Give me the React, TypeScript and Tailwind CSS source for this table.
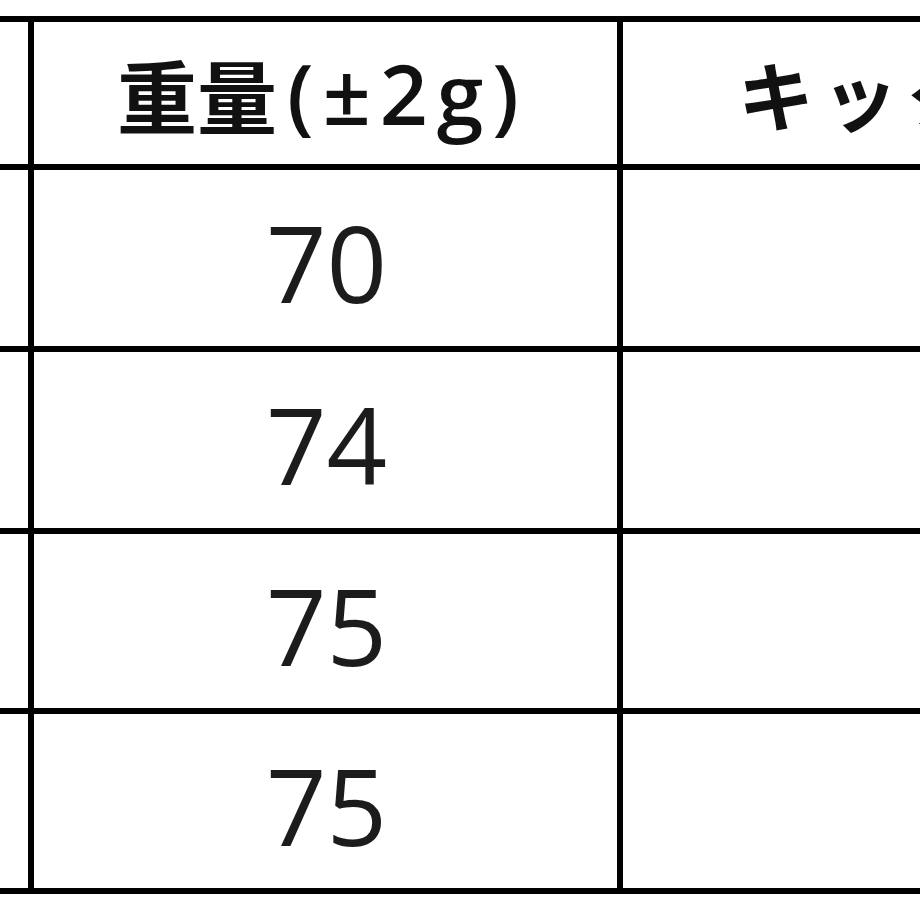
import React from 'react'

const rows = [
  { weight: '70', h: 'h-[176px]' },
  { weight: '74', h: 'h-[176px]' },
  { weight: '75', h: 'h-[174px]' },
  { weight: '75', h: 'h-[174px]' },
]

export default function App() {
  return (
    <div className="w-[920px] h-[920px] overflow-hidden bg-white pt-[16px]">
      <div className="w-[1300px] border-t-[6px] border-black">
        <div className="flex h-[148px] border-b-[6px] border-black">
          <div className="w-[34px] shrink-0 border-r-[6px] border-black" />
          <div className="w-[589px] shrink-0 border-r-[6px] border-black flex items-center justify-center pr-[6px]">
            <span className="text-[80px] font-bold leading-none text-[#111] font-['Noto_Sans_CJK_JP',sans-serif]">
              重量
            </span>
            <span className="text-[84px] font-semibold leading-none tracking-[9px] pl-[10px] text-[#111] font-['Open_Sans',sans-serif]">
              (±2g)
            </span>
          </div>
          <div className="flex-1 flex items-center pl-[115px]">
            <span className="text-[76px] font-bold leading-none tracking-[8px] text-[#111] font-['Noto_Sans_CJK_JP',sans-serif]">
              キックス
            </span>
          </div>
        </div>
        {rows.map((r, i) => (
          <div key={i} className={`flex ${r.h} border-b-[6px] border-black box-content`}>
            <div className="w-[34px] shrink-0 border-r-[6px] border-black" />
            <div className="w-[589px] shrink-0 border-r-[6px] border-black flex items-center justify-center pt-[8px] pl-[2px]">
              <span className="text-[106px] leading-none text-[#1c1c1c] font-['Open_Sans',sans-serif]">{r.weight}</span>
            </div>
            <div className="flex-1" />
          </div>
        ))}
      </div>
    </div>
  )
}
